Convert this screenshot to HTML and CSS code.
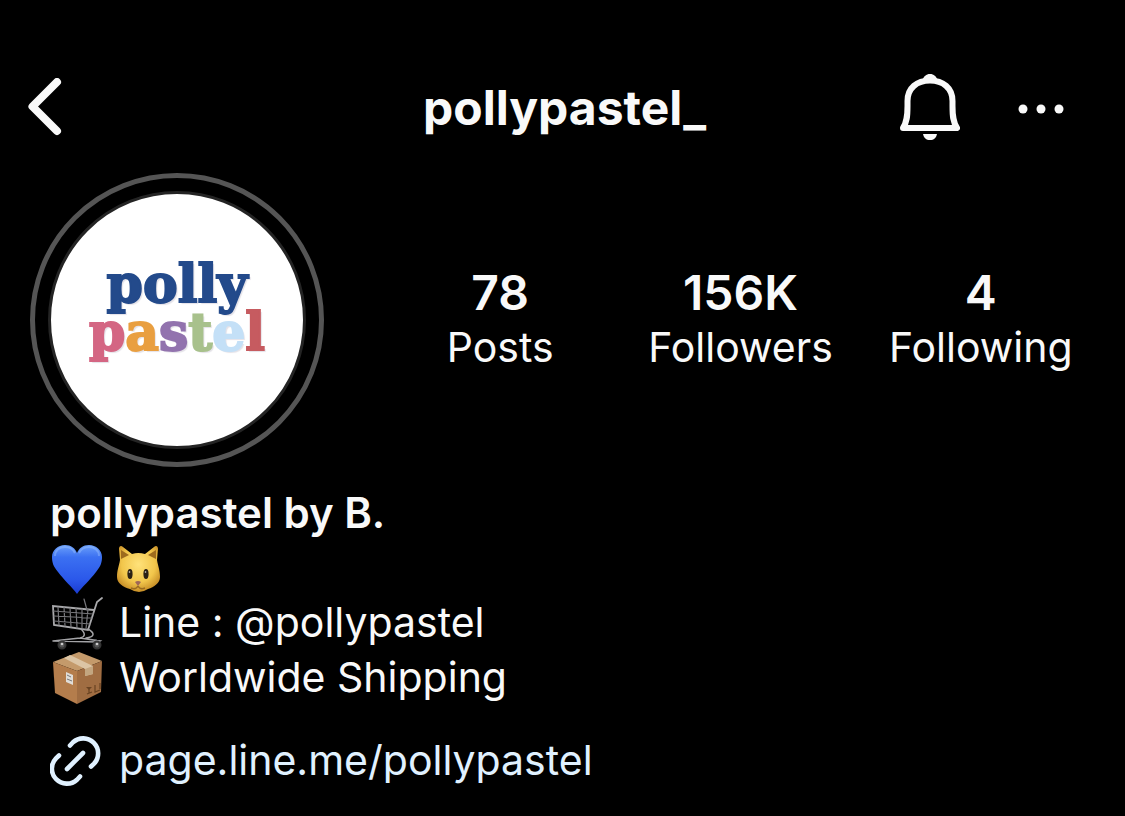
FILE: index.html
```html
<!DOCTYPE html>
<html lang="en">
<head>
<meta charset="utf-8">
<meta name="viewport" content="width=device-width, initial-scale=1">
<title>pollypastel_</title>
<link rel="stylesheet" href="styles.css">
</head>
<body>
<header class="topbar">
  <button class="icon-button back" type="button" aria-label="Back">
    <svg width="34" height="58" viewBox="0 0 34 58" fill="none" stroke="currentColor" stroke-width="8" stroke-linecap="round" stroke-linejoin="round"><path d="M29 4 4.500 28.500 29 53"/></svg>
  </button>
  <h1 class="username">pollypastel_</h1>
  <div class="actions">
    <button class="icon-button" type="button" aria-label="Notifications">
      <svg width="60" height="68" viewBox="0 0 60 68">
        <path d="M3 55C7 49 7.500 43 7.500 33V28C7.500 15 17 7.500 30 7.500S52.500 15 52.500 28V33C52.500 43 53 49 57 55Z" fill="none" stroke="currentColor" stroke-width="6" stroke-linejoin="round"/>
        <path d="M22 8C24 3 26 1 30 1s6 2 8 7Z" fill="currentColor"/>
        <path d="M23 61H37C36 65 34 67 30 67S24 65 23 61Z" fill="currentColor"/>
      </svg>
    </button>
    <button class="icon-button" type="button" aria-label="More options">
      <svg width="46" height="14" viewBox="0 0 46 14" fill="currentColor"><circle cx="5" cy="9" r="4.500"/><circle cx="23" cy="9" r="4.500"/><circle cx="41" cy="9" r="4.500"/></svg>
    </button>
  </div>
</header>

<main>
  <section class="summary">
    <div class="avatar">
      <div class="logo">
        <span class="navy">polly</span>
        <span><span class="pink">p</span><span class="orange">a</span><span class="purple">s</span><span class="green">t</span><span class="sky">e</span><span class="red">l</span></span>
      </div>
    </div>
    <ul class="stats">
      <li><strong>78</strong><span>Posts</span></li>
      <li><strong>156K</strong><span>Followers</span></li>
      <li><strong>4</strong><span>Following</span></li>
    </ul>
  </section>

  <section class="bio">
    <h2 class="name">pollypastel by B.</h2>
    <div class="line emojis">
      <svg class="emoji" viewBox="0 0 54 54" role="img" aria-label="Blue heart">
        <defs>
          <linearGradient id="heart" x1="0" y1="0" x2="0" y2="1"><stop offset="0" stop-color="#6ba0fa"/><stop offset=".25" stop-color="#3b70f2"/><stop offset=".7" stop-color="#2b58ea"/><stop offset="1" stop-color="#1a3bd0"/></linearGradient>
          <radialGradient id="cat" cx=".5" cy=".4" r=".65"><stop offset="0" stop-color="#ffe27a"/><stop offset=".6" stop-color="#f2c64b"/><stop offset="1" stop-color="#bd811e"/></radialGradient>
        </defs>
        <path d="M27 53C22 46 14 39 8 31 3 25 2 21 2 16 2 9 8 4 15 4c6 0 10 3 12 8 2-5 6-8 12-8 7 0 13 5 13 12 0 5-1 9-6 15-6 8-14 15-19 22Z" fill="url(#heart)"/>
        <path d="M5 15C5 9 10 6 15 6s8 2 10 6M29 12c2-4 5-6 10-6s10 3 10 9" fill="none" stroke="#a0c5ff" stroke-width="2" opacity=".4"/>
      </svg>
      <svg class="emoji" viewBox="0 0 54 54" role="img" aria-label="Cat face">
        <path d="M8 19 7 8C7 5 9 4 11 6L20 13Q26 11 33 13L42 6C44 4 46 5 46 8L45 19C46 25 48 29 48 36C48 42 42 46 36 48Q27 54 18 48C11 46 5 42 5 36 5 29 7 25 8 19Z" fill="url(#cat)"/>
        <path d="M9 18 9 9 17 14ZM44 18 44 9 36 14Z" fill="#9d6b1e"/>
        <ellipse cx="18" cy="33" rx="2.600" ry="5" fill="#2b2114"/><ellipse cx="34" cy="33" rx="2.600" ry="5" fill="#2b2114"/>
        <circle cx="17.500" cy="31" r=".8" fill="#ddd"/><circle cx="33.500" cy="31" r=".8" fill="#ddd"/>
        <path d="M23 41Q26 39 29 41L26 45Z" fill="#9e6658"/>
        <path d="M26 45Q24 49 19 47M26 45Q28 49 33 47" fill="none" stroke="#9a6b20" stroke-width="1.500"/>
      </svg>
    </div>
    <p class="line">
      <svg class="emoji" viewBox="0 0 54 54" fill="none" stroke-linecap="round" role="img" aria-label="Shopping cart">
        <path d="M52 2 47 6 38 34 4 29 3 10 44 14" stroke="#a9a9ac" stroke-width="1.800"/>
        <path d="M3 15 43 18M4 20 42 22M4 25 40 28M8 11 9 29M14 11 15 30M20 12 21 31M26 12 27 32M32 13 32 33M38 13 36 33M34 3 37 14" stroke="#77777b" stroke-width="1.200"/>
        <path d="M31 33C36 38 35 41 30 42L3 45M38 33C45 37 45 41 36 42M30 42 50 45 48 46 3 45M10 45v4M46 44v4" stroke="#a3a3a6" stroke-width="1.500"/>
        <circle cx="12" cy="49" r="3.500" fill="#555" stroke="#353535" stroke-width="2"/><circle cx="47" cy="49" r="3.500" fill="#555" stroke="#353535" stroke-width="2"/><circle cx="12" cy="48" r="1.300" fill="#ccc"/><circle cx="47" cy="48" r="1.300" fill="#ccc"/>
      </svg>
      <span>Line : @pollypastel</span>
    </p>
    <p class="line">
      <svg class="emoji" viewBox="0 0 54 54" role="img" aria-label="Package">
        <path d="M3 11 29 1 52 10 27 20Z" fill="#c49a6b"/><path d="M3 11 27 20 27 53 5 42Z" fill="#b47d4c"/><path d="M27 20 52 10 51 41 27 53Z" fill="#a06d42"/>
        <path d="M14 7 20 4 43 15V23L35 25V18Z" fill="#dcc5a5"/><path d="M35 18 43 15V23L35 25Z" fill="#c3a680"/>
        <path d="M16 21 23 24V34L16 31Z" fill="#e0ddd8"/><path d="M17 24 21 26M17 28 22 30" stroke="#777" stroke-width="1"/>
        <path d="M36 36 42 36 39 39Z" fill="#694322"/><path d="M39 38V42M37 43 42 41M45 34V41L50 39M45 34V40M50 32V38" fill="none" stroke="#694322" stroke-width="1.200"/>
      </svg>
      <span>Worldwide Shipping</span>
    </p>
    <a class="line link" href="#">
      <svg class="emoji" viewBox="0 0 54 54" fill="none" stroke="currentColor" stroke-width="4.600" stroke-linecap="round" aria-hidden="true">
        <path d="M20 11.500 23 8.300A15 15 0 0 1 44 29.700L41 32.500M30 42.500 27 45.700A15 15 0 0 1 6 24.300L9 21.500M17 35 33 19"/>
      </svg>
      <span>page.line.me/pollypastel</span>
    </a>
  </section>
</main>
</body>
</html>
```
FILE: styles.css
```css
* { box-sizing: border-box; }
body {
  margin: 0;
  padding: 69px 24px 24px 28px;
  background: #000;
  color: #f9f9f9;
  font-family: Inter, "Liberation Sans", sans-serif;
  font-size: 41px;
  line-height: 55px;
}
h1, h2, p, ul { margin: 0; padding: 0; }
.topbar {
  display: grid;
  grid-template-columns: 1fr auto 1fr;
  align-items: center;
  min-height: 76px;
}
.icon-button {
  display: flex;
  padding: 0;
  border: 0;
  background: none;
  color: inherit;
}
.icon-button svg { display: block; }
.username { font-size: 48px; font-weight: 700; }
.actions {
  display: flex;
  justify-content: flex-end;
  align-items: center;
  gap: 58px;
  padding-right: 37px;
}
.summary {
  display: flex;
  align-items: center;
  gap: 56px;
  padding: 28px 0 18px 2px;
}
.avatar {
  flex: none;
  width: 294px;
  height: 294px;
  padding: 13px;
  border: 5px solid #555;
  border-radius: 50%;
}
.logo {
  display: flex;
  flex-direction: column;
  align-items: center;
  justify-content: center;
  height: 100%;
  padding-bottom: 24px;
  border: 3px solid #242424;
  border-radius: 50%;
  background: #fff;
  font-family: "DejaVu Serif", serif;
  font-size: 52px;
  font-weight: 700;
  line-height: 48px;
  -webkit-text-stroke: 2px currentColor;
  text-shadow: 2px 2px 1px #e4e2e8;
}
.navy { color: #234a8b; }
.pink { color: #d46683; }
.orange { color: #e99f40; }
.purple { color: #9273ae; }
.green { color: #a8c18c; }
.sky { color: #c4e0f7; }
.red { color: #c65b60; }
.stats {
  flex: 1;
  display: grid;
  grid-template-columns: repeat(3, 1fr);
  list-style: none;
  text-align: center;
}
.stats strong, .stats span { display: block; line-height: 54px; }
.stats strong { font-size: 48px; font-weight: 600; }
.bio { padding-left: 22px; }
.name { font-size: 42px; font-weight: 600; }
.line { display: flex; align-items: center; gap: 15px; }
.emojis { gap: 8px; height: 55px; }
.emoji { flex: none; width: 54px; height: 54px; }
.link {
  width: fit-content;
  margin-top: 28px;
  color: #e0f1ff;
  text-decoration: none;
}
```
